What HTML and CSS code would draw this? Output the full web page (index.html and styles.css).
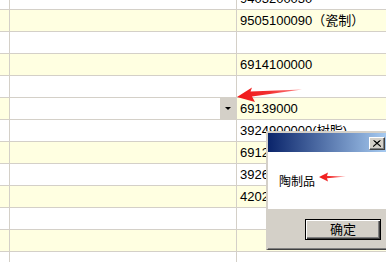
FILE: index.html
```html
<!DOCTYPE html>
<html>
<head>
<meta charset="utf-8">
<link rel="stylesheet" href="styles.css">
</head>
<body>
<div class="grid">
  <div class="row"><div class="c0"></div><div class="c1"></div><div class="c2">9403200030</div></div>
  <div class="row y"><div class="c0"></div><div class="c1"></div><div class="c2">9505100090（瓷制）</div></div>
  <div class="row"><div class="c0"></div><div class="c1"></div><div class="c2"></div></div>
  <div class="row y"><div class="c0"></div><div class="c1"></div><div class="c2">6914100000</div></div>
  <div class="row"><div class="c0"></div><div class="c1"></div><div class="c2"></div></div>
  <div class="row y"><div class="c0"></div><div class="c1 edit"><div class="dd"><span class="tri"></span></div></div><div class="c2">69139000</div></div>
  <div class="row"><div class="c0"></div><div class="c1"></div><div class="c2">3924900000(树脂)</div></div>
  <div class="row y"><div class="c0"></div><div class="c1"></div><div class="c2">6912000000</div></div>
  <div class="row"><div class="c0"></div><div class="c1"></div><div class="c2">3926909090</div></div>
  <div class="row y"><div class="c0"></div><div class="c1"></div><div class="c2">4202920000</div></div>
  <div class="row"><div class="c0"></div><div class="c1"></div><div class="c2"></div></div>
  <div class="row y"><div class="c0"></div><div class="c1"></div><div class="c2"></div></div>
  <div class="row"><div class="c0"></div><div class="c1"></div><div class="c2"></div></div>
</div>

<div class="dialog">
  <div class="title">
    <div class="close">
      <svg width="8" height="7" viewBox="0 0 8 7"><path d="M0.5 0.5 L7.5 6.5 M1.5 0.5 L8 6.5 M7.5 0.5 L0.5 6.5 M6.5 0.5 L0 6.5" stroke="#000" stroke-width="1" fill="none"/></svg>
    </div>
  </div>
  <div class="body">陶制品</div>
  <div class="foot"><div class="btn">确定</div></div>
</div>

<svg class="arrows" width="386" height="262" viewBox="0 0 386 262">
  <defs>
    <linearGradient id="g1" x1="0" y1="0" x2="1" y2="0">
      <stop offset="0" stop-color="#f01818"/>
      <stop offset="0.5" stop-color="#f23030"/>
      <stop offset="1" stop-color="#ff8a8a"/>
    </linearGradient>
  </defs>
  <polygon points="237,97 252,87.5 250.5,91.5 302,89.5 252,96.5 255,102" fill="url(#g1)"/>
  <polygon points="319,177 328,172.5 327,176 346,176.6 327,178.2 328,181.5" fill="url(#g1)"/>
</svg>
</body>
</html>
```

FILE: styles.css
```css
html, body {
  margin: 0;
  padding: 0;
}
body {
  width: 386px;
  height: 262px;
  overflow: hidden;
  position: relative;
  background: #fff;
  font-family: "Liberation Sans", "Noto Sans CJK SC", sans-serif;
  font-size: 13px;
  color: #000;
}
.grid {
  margin-top: -12px;
}
.row {
  display: flex;
  height: 22px;
  box-sizing: border-box;
  border-bottom: 1px solid #d4d0c8;
  background: #fff;
}
.row.y {
  background: #ffffe1;
}
.c0 {
  width: 10px;
  flex: none;
  box-sizing: border-box;
  border-right: 1px solid #d4d0c8;
}
.c1 {
  width: 227px;
  flex: none;
  box-sizing: border-box;
  border-right: 1px solid #d4d0c8;
}
.c1.edit {
  background: #fff;
  display: flex;
  justify-content: flex-end;
}
.dd {
  width: 16px;
  height: 21px;
  background: #d4d0c8;
  display: flex;
  align-items: center;
  justify-content: center;
}
.tri {
  width: 0;
  height: 0;
  border-left: 3px solid transparent;
  border-right: 3px solid transparent;
  border-top: 3px solid #000;
}
.c2 {
  flex: 1;
  padding-left: 3px;
  line-height: 21px;
  white-space: nowrap;
  overflow: hidden;
}
.dialog {
  position: absolute;
  left: 266px;
  top: 131px;
  width: 122px;
  box-sizing: border-box;
  border-top: 2px solid #d4d0c8;
  border-left: 2px solid #d4d0c8;
  border-bottom: 1px solid #404040;
  border-right: 2px solid #404040;
  background: #d4d0c8;
}
.title {
  height: 19px;
  background: linear-gradient(to right, #0a246a, #a6caf0);
  display: flex;
  justify-content: flex-end;
  align-items: flex-start;
  padding-top: 4px;
  padding-right: 1px;
  box-sizing: border-box;
}
.close {
  width: 16px;
  height: 13px;
  box-sizing: border-box;
  background: #d4d0c8;
  border-top: 1px solid #fff;
  border-left: 1px solid #fff;
  border-right: 1px solid #404040;
  border-bottom: 1px solid #404040;
  box-shadow: inset -1px -1px #808080;
  display: flex;
  align-items: center;
  justify-content: center;
}
.close svg {
  display: block;
}
.body {
  height: 57px;
  background: #fff;
  display: flex;
  align-items: center;
  padding-left: 11px;
  font-family: "Noto Sans CJK SC", sans-serif;
  font-size: 12px;
}
.foot {
  height: 40px;
  box-sizing: border-box;
  background: #d4d0c8;
  border-bottom: 1px solid #808080;
  display: flex;
  justify-content: flex-end;
  align-items: flex-start;
  padding-top: 10px;
  padding-right: 5px;
}
.btn {
  width: 76px;
  height: 21px;
  box-sizing: border-box;
  border: 1px solid #000;
  background: #d4d0c8;
  box-shadow: inset 1px 1px #fff, inset -1px -1px #404040, inset -2px -2px #808080;
  font-family: "Noto Sans CJK SC", sans-serif;
  font-size: 13px;
  line-height: 18px;
  text-align: center;
}
.arrows {
  position: absolute;
  left: 0;
  top: 0;
  pointer-events: none;
}
```
